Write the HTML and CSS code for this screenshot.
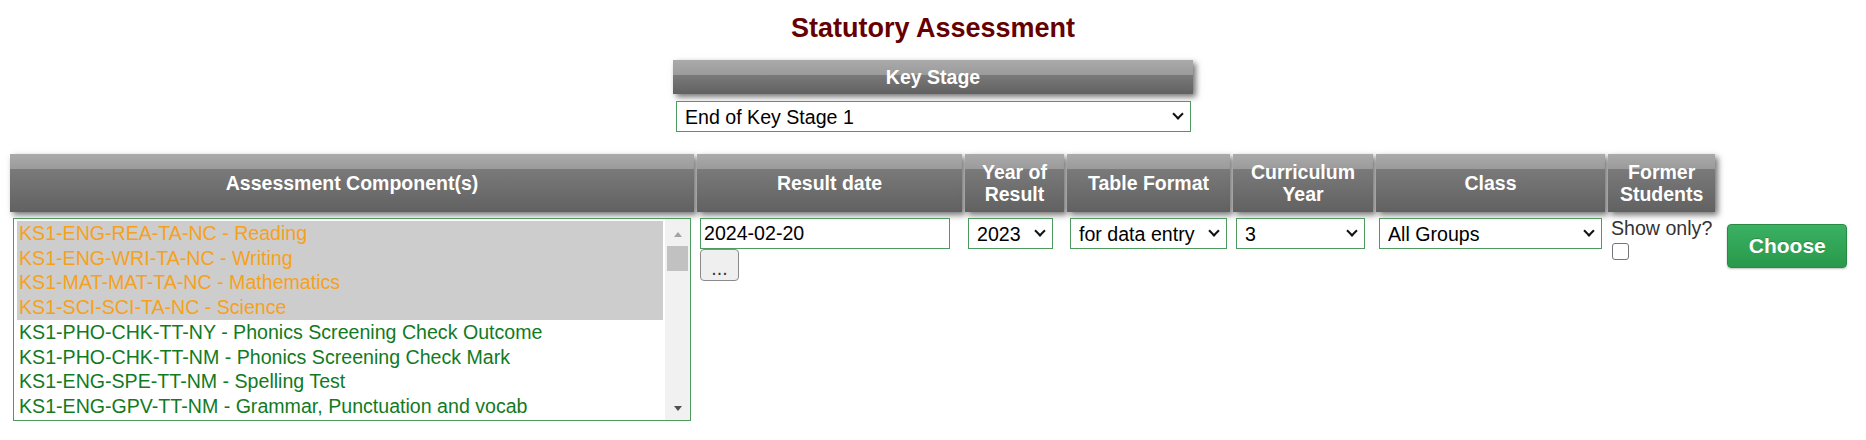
FILE: index.html
```html
<!DOCTYPE html>
<html lang="en">
<head>
    <meta charset="UTF-8">
    <title>Statutory Assessment</title>
    <link rel="stylesheet" href="styles.css">
</head>
<body>
    <h1 class="title">Statutory Assessment</h1>

    <table class="stage">
        <tr><th>Key Stage</th></tr>
        <tr>
            <td>
                <span class="pick">
                    <select class="w-stage">
                        <option>End of Key Stage 1</option>
                    </select>
                </span>
            </td>
        </tr>
    </table>

    <table class="main">
        <tr>
            <th class="c-comp">Assessment Component(s)</th>
            <th class="c-date">Result date</th>
            <th class="c-year">Year of<br>Result</th>
            <th class="c-format">Table Format</th>
            <th class="c-curr">Curriculum<br>Year</th>
            <th class="c-class">Class</th>
            <th class="c-former">Former<br>Students</th>
        </tr>
        <tr>
            <td>
                <div class="list">
                    <div class="opts">
                        <div class="opt done">KS1-ENG-REA-TA-NC - Reading</div>
                        <div class="opt done">KS1-ENG-WRI-TA-NC - Writing</div>
                        <div class="opt done">KS1-MAT-MAT-TA-NC - Mathematics</div>
                        <div class="opt done">KS1-SCI-SCI-TA-NC - Science</div>
                        <div class="opt">KS1-PHO-CHK-TT-NY - Phonics Screening Check Outcome</div>
                        <div class="opt">KS1-PHO-CHK-TT-NM - Phonics Screening Check Mark</div>
                        <div class="opt">KS1-ENG-SPE-TT-NM - Spelling Test</div>
                        <div class="opt">KS1-ENG-GPV-TT-NM - Grammar, Punctuation and vocab</div>
                    </div>
                    <div class="scroll">
                        <div class="sb-btn up"></div>
                        <div class="thumb"></div>
                        <div class="sb-space"></div>
                        <div class="sb-btn down"></div>
                    </div>
                </div>
            </td>
            <td>
                <input class="date" type="text" value="2024-02-20">
                <button class="dots">...</button>
            </td>
            <td>
                <span class="pick">
                    <select class="w-year"><option>2023</option></select>
                </span>
            </td>
            <td>
                <span class="pick">
                    <select class="w-format"><option>for data entry</option></select>
                </span>
            </td>
            <td>
                <span class="pick">
                    <select class="w-curr"><option>3</option></select>
                </span>
            </td>
            <td>
                <span class="pick">
                    <select class="w-class"><option>All Groups</option></select>
                </span>
            </td>
            <td class="former">
                <span>Show only?</span>
                <input type="checkbox">
            </td>
            <td>
                <button class="choose">Choose</button>
            </td>
        </tr>
    </table>
</body>
</html>
```

FILE: styles.css
```css
body {
    margin: 0;
    font-family: "Liberation Sans", Arial, sans-serif;
    font-size: 19.6px;
    color: #000;
    background: #fff;
}
.title {
    margin: 0 0 13px;
    padding-top: 12px;
    font-size: 27px;
    line-height: 32px;
    color: #660000;
    text-align: center;
}
table {
    border-collapse: separate;
    border-spacing: 3px;
}
th {
    box-sizing: border-box;
    padding: 0 6px;
    color: #fff;
    font-size: 19.5px;
    line-height: 22px;
    font-weight: bold;
    text-align: center;
    background: linear-gradient(#aaaaaa, #9b9b9b 15px, #7a7a7a 15px, #616161);
    box-shadow: 3px 3px 6px rgba(0, 0, 0, 0.55);
}
td {
    padding: 3px;
    vertical-align: top;
}
.stage {
    margin: 0 auto;
}
.stage th {
    width: 520px;
    height: 34px;
}
.stage td {
    padding: 4px 2px 3px 3px;
}
.main {
    margin: 13px 0 0 7px;
}
.main th {
    height: 58px;
}
.c-comp { width: 684px; }
.c-date { width: 265px; }
.c-year { width: 99px; }
.c-format { width: 163px; }
.c-curr { width: 140px; }
.c-class { width: 229px; }
.c-former { width: 107px; }

/* selects */
.pick {
    position: relative;
    display: inline-block;
    vertical-align: top;
}
.pick::after {
    content: "";
    position: absolute;
    right: 9px;
    top: 9px;
    width: 6px;
    height: 6px;
    border-right: 2px solid #111;
    border-bottom: 2px solid #111;
    transform: rotate(45deg);
    pointer-events: none;
}
.pick select {
    -webkit-appearance: none;
    appearance: none;
    display: block;
    box-sizing: border-box;
    height: 31px;
    padding: 0 28px 0 8px;
    border: 1px solid #4f9a5f;
    border-radius: 0;
    background: #fff;
    color: #000;
    font: inherit;
}
.w-stage { width: 515px; }
.w-year { width: 85px; }
.w-format { width: 157px; }
.w-curr { width: 129px; }
.w-class { width: 223px; }

/* component list */
.list {
    display: flex;
    box-sizing: border-box;
    width: 678px;
    height: 203px;
    border: 1px solid #4f9a5f;
    background: #fff;
}
.opts {
    flex: 1;
    padding: 2px 2px 2px 3px;
    overflow: hidden;
}
.opt {
    padding-left: 2px;
    line-height: 24.7px;
    color: #127a1f;
    white-space: nowrap;
}
.opt.done {
    background: #cdcdcd;
    color: #f6a11c;
}
.scroll {
    display: flex;
    flex-direction: column;
    width: 25px;
    background: #f1f1f1;
}
.sb-btn {
    height: 24px;
    display: flex;
    align-items: center;
    justify-content: center;
}
.up {
    padding-top: 3px;
}
.up::before {
    content: "";
    border-left: 4.5px solid transparent;
    border-right: 4.5px solid transparent;
    border-bottom: 5px solid #a3a3a3;
}
.down::before {
    content: "";
    border-left: 4.5px solid transparent;
    border-right: 4.5px solid transparent;
    border-top: 5px solid #505050;
}
.thumb {
    height: 25px;
    margin: 0 2px;
    background: #c1c1c1;
}
.sb-space {
    flex: 1;
}

/* date */
.date {
    display: block;
    box-sizing: border-box;
    width: 250px;
    height: 31px;
    padding: 0 3px;
    border: 1px solid #4f9a5f;
    font: inherit;
    color: #000;
}
.dots {
    display: block;
    box-sizing: border-box;
    width: 39px;
    height: 32px;
    padding: 6px 0 0;
    border: 1px solid #8a8a8a;
    border-radius: 4px;
    background: #efefef;
    color: #333;
    font: 19.6px "Liberation Sans", Arial, sans-serif;
}

/* former students */
.former {
    color: #333;
    line-height: 21px;
    white-space: nowrap;
}
.former input {
    -webkit-appearance: none;
    appearance: none;
    display: block;
    box-sizing: border-box;
    width: 17px;
    height: 17px;
    margin: 4px 0 0 1px;
    border: 1.5px solid #767676;
    border-radius: 3px;
    background: #fff;
}

.choose {
    box-sizing: border-box;
    width: 120px;
    height: 44px;
    margin: 6px 0 0 6px;
    border: 1px solid #2a8a43;
    border-radius: 4px;
    background: linear-gradient(#3bb163, #28994b);
    color: #fff;
    font: bold 21px "Liberation Sans", Arial, sans-serif;
    text-shadow: 0 -1px 0 rgba(0, 0, 0, 0.2);
    box-shadow: 0 1px 2px rgba(0, 0, 0, 0.25);
}
```
